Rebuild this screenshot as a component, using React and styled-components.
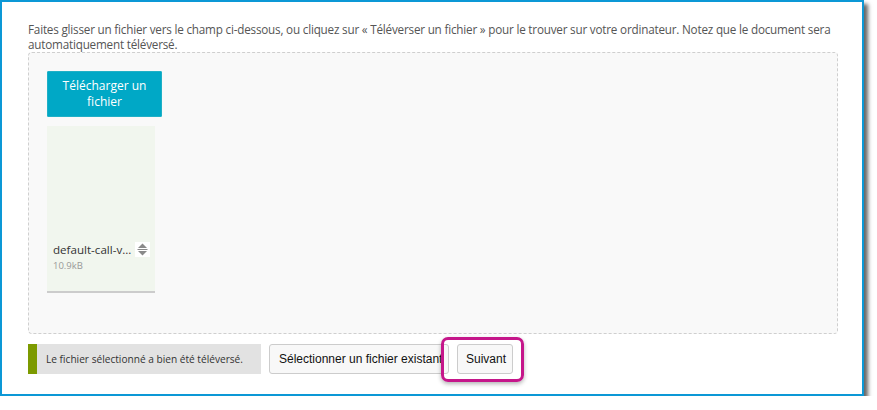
import React from "react";
import styled, { createGlobalStyle } from "styled-components";

const GlobalStyle = createGlobalStyle`
  html, body {
    margin: 0;
    padding: 0;
    background: #ffffff;
  }
  body {
    font-family: "Open Sans", "Noto Sans", sans-serif;
  }
`;

const Frame = styled.div`
  box-sizing: border-box;
  width: 864px;
  height: 396px;
  border: 2px solid #0c98d6;
  background: #fff;
  box-shadow: 4px 4px 4px rgba(0, 0, 0, 0.6);
  padding: 20px 24px 0 26px;
  display: flex;
  flex-direction: column;
`;

const Intro = styled.p`
  margin: 0;
  font-size: 11.7px;
  letter-spacing: -0.2px;
  line-height: 15px;
  color: #555;
`;

const DropZone = styled.div`
  box-sizing: border-box;
  height: 282px;
  border: 1px dashed #cfcfcf;
  border-radius: 4px;
  background: #f9f9f9;
  padding: 18px;
  display: flex;
  flex-direction: column;
  align-items: flex-start;
  gap: 9px;
`;

const UploadButton = styled.button`
  box-sizing: border-box;
  width: 115px;
  height: 46px;
  border: 1px solid #1fb0c6;
  border-radius: 1px;
  background: #00a8c6;
  color: #fff;
  font-family: "Open Sans", sans-serif;
  font-size: 12px;
  font-weight: 500;
  line-height: 16px;
  padding: 0 8px;
`;

const FileCard = styled.div`
  box-sizing: border-box;
  width: 108px;
  height: 167px;
  background: #f1f6ee;
  border-bottom: 2px solid #cccccc;
  padding: 0 6px 19px;
  display: flex;
  flex-direction: column;
  justify-content: flex-end;
`;

const NameRow = styled.div`
  display: flex;
  align-items: center;
  justify-content: space-between;
`;

const FileName = styled.span`
  font-size: 11.6px;
  color: #333;
`;

const SortHandle = styled.span`
  width: 15px;
  height: 15px;
  background: #fff;
  display: flex;
  align-items: center;
  justify-content: center;
  margin-right: -1px;
`;

const FileSize = styled.span`
  margin-top: 2px;
  font-size: 9.5px;
  color: #999;
`;

const Footer = styled.div`
  margin-top: 10px;
  display: flex;
  align-items: center;
  gap: 8px;
`;

const Status = styled.div`
  box-sizing: border-box;
  width: 233px;
  height: 30px;
  background: #e2e2e2;
  border-left: 9px solid #7c9a00;
  padding-left: 9px;
  display: flex;
  align-items: center;
  font-size: 10.15px;
  color: #333;
`;

const Button = styled.button`
  box-sizing: border-box;
  height: 30px;
  width: ${(p) => p.$width}px;
  border: 1px solid #cccccc;
  border-radius: 3px;
  background: #f8f8f8;
  color: #111;
  font-family: "Liberation Sans", Arial, sans-serif;
  font-size: 12px;
  padding: 0 0 0 ${(p) => p.$indent}px;
  text-align: left;
  white-space: nowrap;
`;

const Highlighted = styled.span`
  position: relative;
  display: inline-flex;

  &::after {
    content: "";
    position: absolute;
    top: -7px;
    left: -16px;
    right: -11px;
    bottom: -8px;
    border: 3px solid #c5168a;
    border-radius: 7px;
    box-shadow: 0 2px 4px rgba(0, 0, 0, 0.3);
    pointer-events: none;
  }
`;

const SortIcon = () => (
  <svg width="11" height="13" viewBox="0 0 11 13">
    <path d="M5.5 0.5 L10 5 L1 5 Z" fill="#8a8a8a" />
    <rect x="0.5" y="6" width="10" height="1" fill="#8a8a8a" />
    <path d="M1 8 L10 8 L5.5 12.5 Z" fill="#8a8a8a" />
  </svg>
);

const App = () => {
  return (
    <>
      <GlobalStyle />
      <Frame>
        <Intro>
          Faites glisser un fichier vers le champ ci-dessous, ou cliquez sur « Téléverser un fichier » pour le
          trouver sur votre ordinateur. Notez que le document sera automatiquement téléversé.
        </Intro>
        <DropZone>
          <UploadButton>Télécharger un fichier</UploadButton>
          <FileCard>
            <NameRow>
              <FileName>default-call-v...</FileName>
              <SortHandle>
                <SortIcon />
              </SortHandle>
            </NameRow>
            <FileSize>10.9kB</FileSize>
          </FileCard>
        </DropZone>
        <Footer>
          <Status>Le fichier sélectionné a bien été téléversé.</Status>
          <Button $width={180} $indent={9}>
            Sélectionner un fichier existant
          </Button>
          <Highlighted>
            <Button $width={56} $indent={8}>
              Suivant
            </Button>
          </Highlighted>
        </Footer>
      </Frame>
    </>
  );
};

export default App;
